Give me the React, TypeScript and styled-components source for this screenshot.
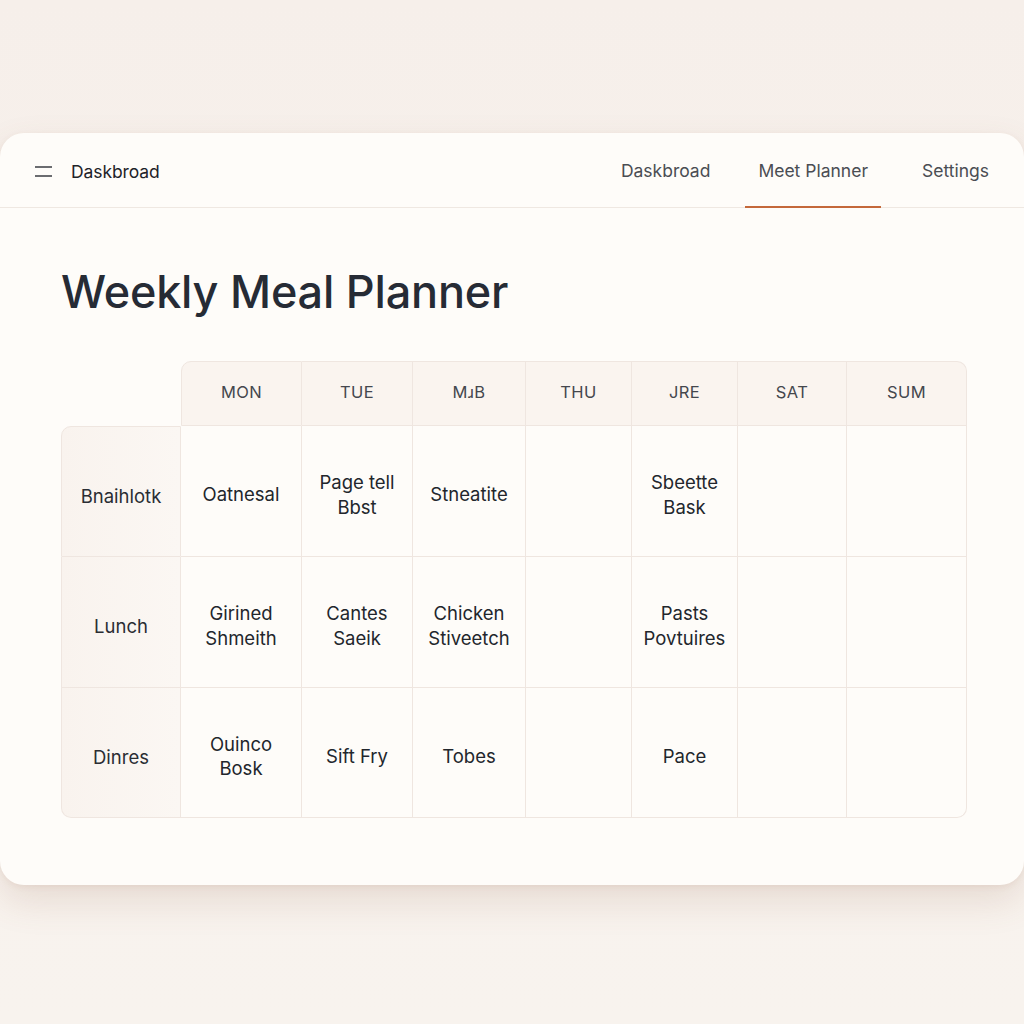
import { FC } from 'react'
import styled, { createGlobalStyle } from 'styled-components'

const GlobalStyle = createGlobalStyle`
    html, body {
        margin: 0;
        padding: 0;
    }
    body {
        background: linear-gradient(180deg, #f6efea 0%, #f8f2ed 60%, #f8f3ee 100%);
        font-family: Inter, "Noto Sans", "Liberation Sans", sans-serif;
        min-height: 1024px;
    }
`

type Variant = 'blank' | 'head' | 'label' | 'cell'

const days = ['MON', 'TUE', 'M\u0279B', 'THU', 'JRE', 'SAT', 'SUM']
const colWidths = [120, 121, 111, 113, 106, 106, 109, 120]
const rowHeights = [65, 131, 131, 130]

const meals: { label: string; items: string[] }[] = [
    { label: 'Bnaihlotk', items: ['Oatnesal', 'Page tell\nBbst', 'Stneatite', '', 'Sbeette\nBask', '', ''] },
    { label: 'Lunch', items: ['Girined\nShmeith', 'Cantes\nSaeik', 'Chicken\nStiveetch', '', 'Pasts\nPovtuires', '', ''] },
    { label: 'Dinres', items: ['Ouinco\nBosk', 'Sift Fry', 'Tobes', '', 'Pace', '', ''] },
]

const MenuIcon: FC = () => (
    <svg width="17" height="12" viewBox="0 0 17 12" fill="none">
        <line x1="0" y1="1" x2="17" y2="1" stroke="#3a3d42" strokeWidth="1.6" />
        <line x1="0" y1="10" x2="17" y2="10" stroke="#3a3d42" strokeWidth="1.6" />
    </svg>
)

const App: FC = () => {
    const navItems = ['Daskbroad', 'Meet Planner', 'Settings']
    return (
        <>
            <GlobalStyle />
            <Page>
                <Card>
                    <Header>
                        <Brand>
                            <MenuIcon />
                            <BrandText>Daskbroad</BrandText>
                        </Brand>
                        <Nav>
                            {navItems.map((n) => (
                                <NavItem key={n} $active={n === 'Meet Planner'}>{n}</NavItem>
                            ))}
                        </Nav>
                    </Header>
                    <Body>
                        <Title>Weekly Meal Planner</Title>
                        <Grid>
                            <Cell $variant="blank" />
                            {days.map((d, i) => (
                                <Cell
                                    key={d}
                                    $variant="head"
                                    $first={i === 0}
                                    $last={i === days.length - 1}
                                >
                                    {d}
                                </Cell>
                            ))}
                            {meals.map((row, r) => (
                                <Row key={row.label} row={row} r={r} total={meals.length} />
                            ))}
                        </Grid>
                    </Body>
                </Card>
            </Page>
        </>
    )
}

const Row: FC<{ row: { label: string; items: string[] }; r: number; total: number }> = ({ row, r, total }) => {
    const isLast = r === total - 1
    return (
        <>
            <Cell $variant="label" $first={r === 0} $bottomLeft={isLast}>{row.label}</Cell>
            {row.items.map((t, i) => (
                <Cell
                    key={i}
                    $variant="cell"
                    $bottomRight={isLast && i === row.items.length - 1}
                >
                    <CellText>{t}</CellText>
                </Cell>
            ))}
        </>
    )
}

const Page = styled.div`
    padding-top: 133px;
    height: 1024px;
    box-sizing: border-box;
`
Page.displayName = "Page"

const Card = styled.div`
    height: 752px;
    background: #fefcf9;
    border-radius: 24px;
    box-shadow: 0 16px 36px rgba(140, 95, 70, 0.16), 0 2px 6px rgba(140, 95, 70, 0.08);
    display: flex;
    flex-direction: column;
    overflow: hidden;
`
Card.displayName = "Card"

const Header = styled.div`
    height: 74px;
    flex-shrink: 0;
    display: flex;
    align-items: stretch;
    justify-content: space-between;
    border-bottom: 1px solid #efe8e2;
    padding: 0 22px 0 35px;
`
Header.displayName = "Header"

const Brand = styled.div`
    display: flex;
    align-items: center;
    gap: 19px;
    padding-top: 3px;
`
Brand.displayName = "Brand"

const BrandText = styled.div`
    font-size: 17.5px;
    color: #1f2329;
    letter-spacing: -0.1px;
`
BrandText.displayName = "BrandText"

const Nav = styled.div`
    display: flex;
    align-items: stretch;
    gap: 22px;
`
Nav.displayName = "Nav"

const NavItem = styled.div<{ $active?: boolean }>`
    display: flex;
    align-items: center;
    padding: 2px 13px 0;
    font-size: 17.5px;
    color: #4a4d53;
    border-bottom: 2px solid ${(p) => (p.$active ? '#c4683a' : 'transparent')};
    margin-bottom: -1px;
    &:last-child {
        margin-left: 6px;
    }
`
NavItem.displayName = "NavItem"

const Body = styled.div`
    padding: 57px 0 0 61px;
`
Body.displayName = "Body"

const Title = styled.h1`
    margin: 0;
    font-size: 45px;
    font-weight: 500;
    line-height: 53px;
    color: #262b35;
    letter-spacing: -0.2px;
`
Title.displayName = "Title"

const Grid = styled.div`
    margin-top: 43px;
    display: grid;
    grid-template-columns: ${colWidths.map((w) => `${w}px`).join(' ')};
    grid-template-rows: ${rowHeights.map((h) => `${h}px`).join(' ')};
`
Grid.displayName = "Grid"

type CellProps = {
    $variant: Variant;
    $first?: boolean;
    $last?: boolean;
    $bottomLeft?: boolean;
    $bottomRight?: boolean;
}

const Cell = styled.div<CellProps>`
    box-sizing: border-box;
    display: flex;
    align-items: center;
    justify-content: center;
    text-align: center;
    color: #22262c;
    font-size: 18.5px;
    ${(p) => p.$variant !== 'blank' && `
        border-right: 1px solid #efe6e0;
        border-bottom: 1px solid #efe6e0;
    `}
    ${(p) => p.$variant === 'head' && `
        background: #faf4ef;
        border-top: 1px solid #efe6e0;
        font-size: 16.5px;
        color: #44474d;
        letter-spacing: 0.4px;
        padding-bottom: 4px;
        ${p.$first ? 'border-left: 1px solid #efe6e0; border-top-left-radius: 10px;' : ''}
        ${p.$last ? 'border-top-right-radius: 10px;' : ''}
    `}
    ${(p) => p.$variant === 'label' && `
        background: linear-gradient(90deg, #f9f3ee 0%, #fbf7f3 100%);
        border-left: 1px solid #efe6e0;
        padding-top: 8px;
        color: #2a2d33;
        ${p.$first ? 'border-top: 1px solid #efe6e0; border-top-left-radius: 10px;' : ''}
        ${p.$bottomLeft ? 'border-bottom-left-radius: 10px;' : ''}
    `}
    ${(p) => p.$variant === 'cell' && `
        background: #fefcf9;
        padding-top: 7px;
        ${p.$bottomRight ? 'border-bottom-right-radius: 10px;' : ''}
    `}
`
Cell.displayName = "Cell"

const CellText = styled.div`
    white-space: pre-line;
    line-height: 24.5px;
`
CellText.displayName = "CellText"

export default App
